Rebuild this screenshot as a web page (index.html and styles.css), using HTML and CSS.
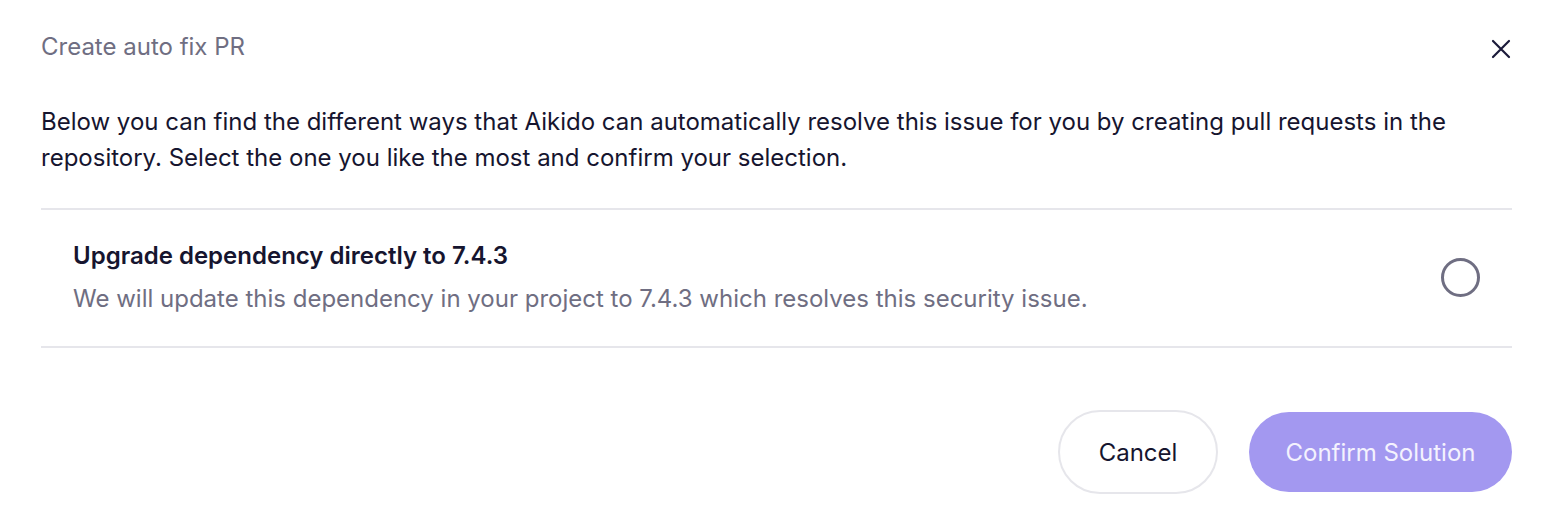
FILE: index.html
```html
<!DOCTYPE html>
<html lang="en">
<head>
    <meta charset="UTF-8">
    <title>Create auto fix PR</title>
    <link rel="stylesheet" href="styles.css">
</head>
<body>
    <div class="modal">
        <div class="modal-header">
            <h2 class="modal-title">Create auto fix PR</h2>
            <button class="close-btn" aria-label="Close">
                <svg width="20" height="20" viewBox="0 0 20 20">
                    <path d="M2 2 L18 18 M18 2 L2 18" stroke="#1b1a3a" stroke-width="2.2" stroke-linecap="round" />
                </svg>
            </button>
        </div>
        <p class="intro">Below you can find the different ways that Aikido can automatically resolve this issue for you by creating pull requests in the repository. Select the one you like the most and confirm your selection.</p>
        <div class="options">
            <label class="option">
                <div class="option-text">
                    <div class="option-title">Upgrade dependency directly to 7.4.3</div>
                    <div class="option-desc">We will update this dependency in your project to 7.4.3 which resolves this security issue.</div>
                </div>
                <span class="radio"></span>
            </label>
        </div>
        <div class="actions">
            <button class="btn btn-cancel">Cancel</button>
            <button class="btn btn-confirm" disabled>Confirm Solution</button>
        </div>
    </div>
</body>
</html>
```

FILE: styles.css
```css
body {
    margin: 0;
    background: #fff;
    font-family: Inter, 'Noto Sans', sans-serif;
    color: #16152f;
}

.modal {
    padding: 29px 36px 0 41px;
}

.modal-header {
    display: flex;
    align-items: center;
    justify-content: space-between;
}

.modal-title {
    margin: 0;
    font-size: 24px;
    font-weight: 400;
    line-height: 36px;
    color: #6f6e82;
}

.close-btn {
    background: none;
    border: none;
    padding: 0;
    margin: 3px 1px 0 0;
    width: 20px;
    height: 20px;
    cursor: pointer;
}

.intro {
    margin: 39px 0 0;
    font-size: 24px;
    line-height: 36px;
    color: #16152f;
}

.options {
    margin-top: 32px;
    border-top: 2px solid #e6e6eb;
    border-bottom: 2px solid #e6e6eb;
}

.option {
    display: flex;
    align-items: center;
    justify-content: space-between;
    padding: 31px 32px 32px;
    cursor: pointer;
}

.option-title {
    font-size: 24px;
    font-weight: 600;
    line-height: 30px;
    color: #16152f;
}

.option-desc {
    margin-top: 13px;
    font-size: 24px;
    line-height: 30px;
    color: #6f6e82;
}

.radio {
    width: 33px;
    height: 33px;
    border: 3px solid #6f6e82;
    border-radius: 50%;
}

.actions {
    display: flex;
    justify-content: flex-end;
    align-items: center;
    gap: 31px;
    margin-top: 62px;
}

.btn {
    font-family: Inter, 'Noto Sans', sans-serif;
    font-size: 24px;
    border-radius: 42px;
    cursor: pointer;
}

.btn-cancel {
    width: 160px;
    height: 84px;
    background: #fff;
    border: 2px solid #e6e6eb;
    color: #16152f;
}

.btn-confirm {
    width: 263px;
    height: 80px;
    background: #a398f0;
    border: none;
    color: #f4f2fe;
}
```
